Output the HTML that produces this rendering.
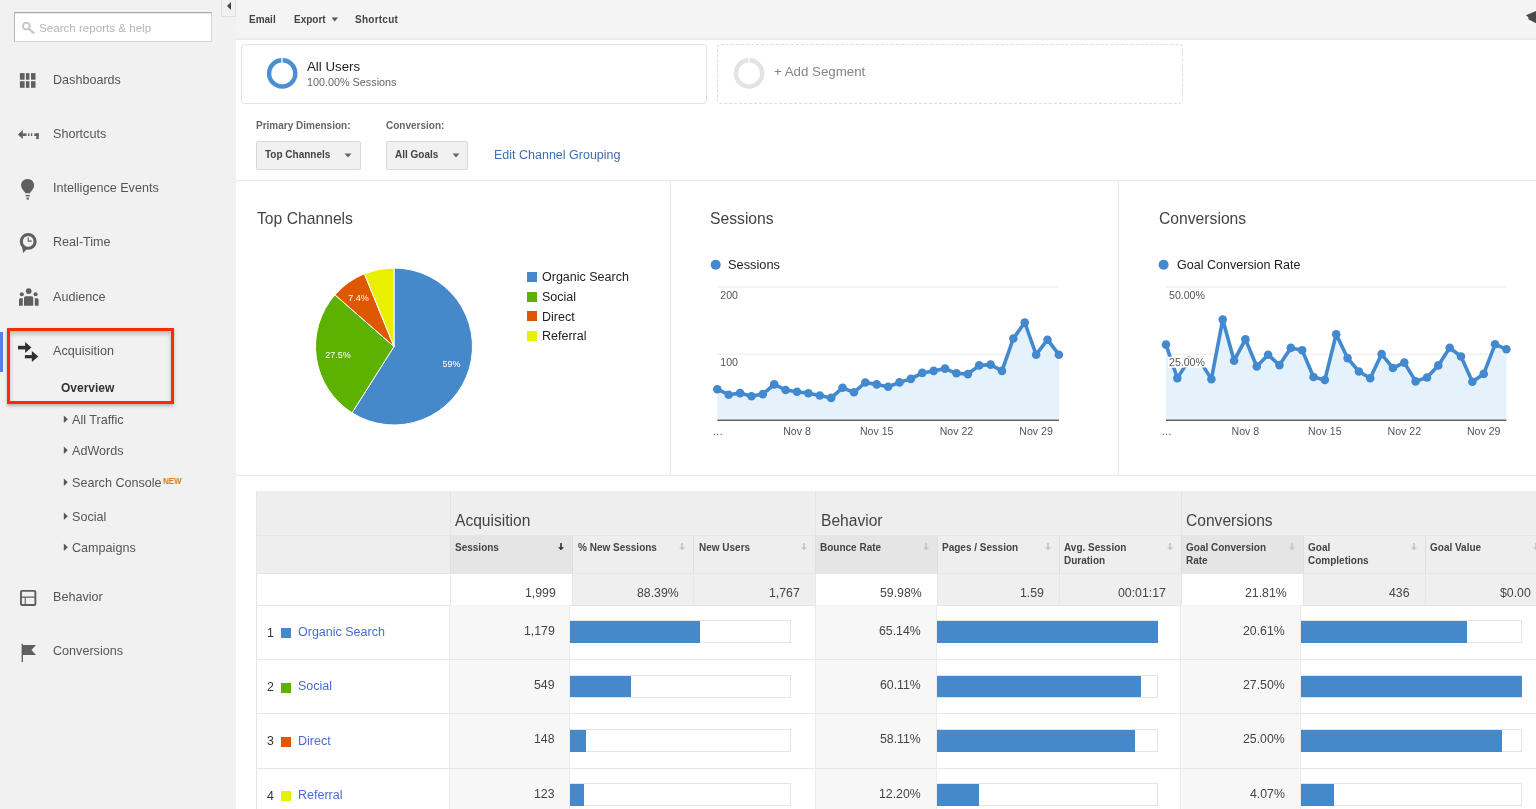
<!DOCTYPE html>
<html><head><meta charset="utf-8"><style>
html,body{margin:0;padding:0;width:1536px;height:809px;overflow:hidden;background:#fff;position:relative;font-family:"Liberation Sans", sans-serif}
.t{position:absolute;white-space:nowrap}
.t{will-change:transform}
</style></head><body>
<div style="position:absolute;left:0px;top:0px;width:236px;height:809px;background:#f1f1f1"></div><div style="position:absolute;left:14px;top:12px;width:198px;height:30px;background:#fff;border:1px solid #d6d6d6;border-top-color:#a8a8a8;border-left-color:#b8b8b8;box-shadow:inset 0 1px 1px rgba(0,0,0,.1);box-sizing:border-box"></div><svg style="position:absolute;left:16px;top:16px" width="24" height="24"><circle cx="10.3" cy="10.2" r="3.4" fill="none" stroke="#c8c8c8" stroke-width="2"/><path d="M13.4 13.3 L17.6 16.8" stroke="#c8c8c8" stroke-width="2.3" stroke-linecap="round"/></svg><div class="t" style="left:39px;top:22.18px;font-size:11.6px;line-height:11.6px;color:#b5b5b5;font-weight:400;">Search reports &amp; help</div><div style="position:absolute;left:221px;top:-1px;width:15px;height:18px;background:#f1f1f1;border:1px solid #ddd;box-sizing:border-box"></div><svg style="position:absolute;left:225px;top:1px" width="8" height="10"><path d="M6 1 L2 5 L6 9 Z" fill="#444"/></svg><div class="t" style="left:53px;top:73.53px;font-size:12.6px;line-height:12.6px;color:#555;font-weight:400;">Dashboards</div><div class="t" style="left:53px;top:127.63px;font-size:12.6px;line-height:12.6px;color:#555;font-weight:400;">Shortcuts</div><div class="t" style="left:53px;top:182.13px;font-size:12.6px;line-height:12.6px;color:#555;font-weight:400;">Intelligence Events</div><div class="t" style="left:53px;top:236.33px;font-size:12.6px;line-height:12.6px;color:#555;font-weight:400;">Real-Time</div><div class="t" style="left:53px;top:290.53px;font-size:12.6px;line-height:12.6px;color:#555;font-weight:400;">Audience</div><div class="t" style="left:53px;top:345.03px;font-size:12.6px;line-height:12.6px;color:#555;font-weight:400;">Acquisition</div><div class="t" style="left:53px;top:591.13px;font-size:12.6px;line-height:12.6px;color:#555;font-weight:400;">Behavior</div><div class="t" style="left:53px;top:645.33px;font-size:12.6px;line-height:12.6px;color:#555;font-weight:400;">Conversions</div><svg style="position:absolute;left:14px;top:66px" width="28" height="28" viewBox="0 0 28 28"><g fill="#5f5f5f"><rect x="5.9" y="7.1" width="4.7" height="6.6"/><rect x="11.9" y="7.1" width="3.5" height="6.6"/><rect x="17" y="7.1" width="4.5" height="6.6"/><rect x="5.9" y="15.2" width="4.7" height="6.6"/><rect x="11.9" y="15.2" width="3.5" height="6.6"/><rect x="17" y="15.2" width="4.5" height="6.6"/></g></svg><svg style="position:absolute;left:14px;top:124px" width="28" height="28" viewBox="0 0 28 28"><g fill="#5f5f5f"><path d="M3.9 10.6 L8.8 6.1 L8.8 15.1 Z"/><rect x="8.5" y="9.4" width="4" height="2.6"/><rect x="14" y="9.4" width="1.4" height="2.6"/><rect x="16.9" y="9.4" width="1.4" height="2.6"/><rect x="20.3" y="9.4" width="4.4" height="2.6"/><rect x="22.3" y="9.4" width="2.4" height="5.7"/></g></svg><svg style="position:absolute;left:14px;top:176px" width="28" height="28" viewBox="0 0 28 28"><g fill="#5f5f5f"><path d="M13.6 3.1 C9.9 3.1 7.1 5.9 7.1 9.3 C7.1 11.9 8.6 13.6 9.8 15 C10.6 15.9 11.2 16.6 11.2 17.3 L16.1 17.3 C16.1 16.6 16.7 15.9 17.5 15 C18.7 13.6 20.1 11.9 20.1 9.3 C20.1 5.9 17.3 3.1 13.6 3.1 Z"/><rect x="11.8" y="18.9" width="3.9" height="1.5"/><rect x="12.5" y="21.6" width="2.4" height="1.9"/></g></svg><svg style="position:absolute;left:14px;top:229px" width="28" height="28" viewBox="0 0 28 28"><circle cx="14.2" cy="12.4" r="6.9" fill="none" stroke="#5f5f5f" stroke-width="3.1"/><path d="M8 17.6 L9.2 23.9 L13.2 19.8 Z" fill="#5f5f5f"/><path d="M14.2 8.3 L14.2 12.1 L17.8 12.1" fill="none" stroke="#5f5f5f" stroke-width="1.1"/></svg><svg style="position:absolute;left:14px;top:283px" width="28" height="28" viewBox="0 0 28 28"><g fill="#5f5f5f"><circle cx="14.7" cy="8.05" r="2.9"/><circle cx="7.8" cy="11.2" r="2.05"/><circle cx="21.6" cy="11.2" r="2.05"/><path d="M10 22.8 L10 15 C10 14 10.8 13.3 11.8 13.3 L17.4 13.3 C18.4 13.3 19.2 14 19.2 15 L19.2 22.8 Z"/><path d="M5 22.8 L5 16.9 C5 15.9 5.8 15.2 6.8 15.2 L8.8 15.2 L8.8 22.8 Z"/><path d="M24.6 22.8 L24.6 16.9 C24.6 15.9 23.8 15.2 22.8 15.2 L20.8 15.2 L20.8 22.8 Z"/></g></svg><svg style="position:absolute;left:14px;top:338px" width="28" height="28" viewBox="0 0 28 28"><g fill="#2e2e2e"><rect x="4" y="7.8" width="7.6" height="3.6"/><path d="M11.1 4 L17.4 9.5 L11.1 14.9 Z"/><rect x="10.9" y="17.1" width="7.4" height="3.2"/><path d="M17.8 13 L24.3 18.5 L17.8 24 Z"/></g></svg><svg style="position:absolute;left:14px;top:584px" width="28" height="28" viewBox="0 0 28 28"><rect x="7" y="6.85" width="14.35" height="14.2" rx="1" fill="none" stroke="#5f5f5f" stroke-width="1.9"/><path d="M7 13.15 L21.3 13.15 M11.25 13.15 L11.25 21" stroke="#5f5f5f" stroke-width="1.1"/></svg><svg style="position:absolute;left:14px;top:640px" width="28" height="28" viewBox="0 0 28 28"><rect x="7.6" y="3.8" width="1.4" height="18.2" fill="#5f5f5f"/><path d="M8.3 5 L22 5 L17.5 10 L22 15 L8.3 15 Z" fill="#5f5f5f"/></svg><div style="position:absolute;left:0px;top:332px;width:3px;height:40px;background:#5a7bef"></div><div style="position:absolute;left:7px;top:328px;width:167px;height:76px;border:3px solid #fd2a06;box-sizing:border-box;box-shadow:0 2px 3px rgba(0,0,0,.25), inset 0 3px 4px rgba(0,0,0,.22)"></div><div class="t" style="left:61px;top:381.84px;font-size:12px;line-height:12px;color:#333;font-weight:700;">Overview</div><svg style="position:absolute;left:63.3px;top:414.8px" width="6" height="9"><path d="M0.8 0.5 L4.8 4.3 L0.8 8.1 Z" fill="#555"/></svg><div class="t" style="left:72px;top:413.53px;font-size:12.6px;line-height:12.6px;color:#555;font-weight:400;">All Traffic</div><svg style="position:absolute;left:63.3px;top:446.1px" width="6" height="9"><path d="M0.8 0.5 L4.8 4.3 L0.8 8.1 Z" fill="#555"/></svg><div class="t" style="left:72px;top:444.83px;font-size:12.6px;line-height:12.6px;color:#555;font-weight:400;">AdWords</div><svg style="position:absolute;left:63.3px;top:478.1px" width="6" height="9"><path d="M0.8 0.5 L4.8 4.3 L0.8 8.1 Z" fill="#555"/></svg><div class="t" style="left:72px;top:476.83px;font-size:12.6px;line-height:12.6px;color:#555;font-weight:400;">Search Console</div><svg style="position:absolute;left:63.3px;top:511.9px" width="6" height="9"><path d="M0.8 0.5 L4.8 4.3 L0.8 8.1 Z" fill="#555"/></svg><div class="t" style="left:72px;top:510.63px;font-size:12.6px;line-height:12.6px;color:#555;font-weight:400;">Social</div><svg style="position:absolute;left:63.3px;top:543.1px" width="6" height="9"><path d="M0.8 0.5 L4.8 4.3 L0.8 8.1 Z" fill="#555"/></svg><div class="t" style="left:72px;top:541.83px;font-size:12.6px;line-height:12.6px;color:#555;font-weight:400;">Campaigns</div><div class="t" style="left:163px;top:476.55px;font-size:8.8px;line-height:8.8px;color:#df7810;font-weight:700;transform:scaleX(0.9);transform-origin:0 0">NEW</div><div style="position:absolute;left:236px;top:0px;width:1300px;height:40px;background:#f4f4f4;border-bottom:2px solid #ebebeb;box-sizing:border-box"></div><div class="t" style="left:249px;top:14.53px;font-size:10px;line-height:10px;color:#444;font-weight:700;">Email</div><div class="t" style="left:294px;top:14.53px;font-size:10px;line-height:10px;color:#444;font-weight:700;">Export</div><svg style="position:absolute;left:331px;top:17px" width="8" height="5"><path d="M0.5 0.5 L7 0.5 L3.75 4.5 Z" fill="#555"/></svg><div class="t" style="left:355px;top:14.53px;font-size:10px;line-height:10px;color:#444;font-weight:700;letter-spacing:0.25px">Shortcut</div><svg style="position:absolute;left:1524px;top:10px" width="12" height="14"><path d="M1.9 5.3 L4.4 7.3 L4.4 9.3 L12 13.2 L12 0.9 Z" fill="#4a4a4a"/></svg><div style="position:absolute;left:241px;top:44px;width:466px;height:60px;border:1px solid #e2e2e2;border-radius:4px;box-sizing:border-box;background:#fff"></div><svg style="position:absolute;left:265px;top:56px" width="34" height="34" viewBox="0 0 34 34">
<circle cx="17.2" cy="17.4" r="13.1" fill="none" stroke="#4a8fd3" stroke-width="4.4"/>
<rect x="16.3" y="1" width="1.3" height="7" fill="#fff"/></svg><div class="t" style="left:307px;top:59.74px;font-size:13.3px;line-height:13.3px;color:#222;font-weight:400;">All Users</div><div class="t" style="left:307px;top:76.56px;font-size:10.8px;line-height:10.8px;color:#666;font-weight:400;">100.00% Sessions</div><div style="position:absolute;left:717px;top:44px;width:466px;height:60px;border:1px dashed #dddddd;border-radius:4px;box-sizing:border-box"></div><svg style="position:absolute;left:732px;top:56px" width="34" height="34" viewBox="0 0 34 34">
<circle cx="17" cy="17.4" r="13.1" fill="none" stroke="#e3e3e3" stroke-width="4.4"/>
<rect x="16.3" y="1" width="1.3" height="7" fill="#fff"/></svg><div class="t" style="left:774px;top:65.24px;font-size:13.3px;line-height:13.3px;color:#858585;font-weight:400;">+ Add Segment</div><div class="t" style="left:256px;top:121.33px;font-size:10px;line-height:10px;color:#666;font-weight:700;">Primary Dimension:</div><div class="t" style="left:386px;top:121.33px;font-size:10px;line-height:10px;color:#666;font-weight:700;">Conversion:</div><div style="position:absolute;left:256px;top:141px;width:105px;height:29px;background:#f1f1f1;border:1px solid #d9d9d9;border-radius:2px;box-sizing:border-box"></div><div class="t" style="left:265px;top:149.73px;font-size:10px;line-height:10px;color:#444;font-weight:700;">Top Channels</div><svg style="position:absolute;left:344px;top:153px" width="8" height="5"><path d="M0.5 0.5 L7.5 0.5 L4 4.5 Z" fill="#666"/></svg><div style="position:absolute;left:386px;top:141px;width:82px;height:29px;background:#f1f1f1;border:1px solid #d9d9d9;border-radius:2px;box-sizing:border-box"></div><div class="t" style="left:395px;top:149.73px;font-size:10px;line-height:10px;color:#444;font-weight:700;">All Goals</div><svg style="position:absolute;left:452px;top:153px" width="8" height="5"><path d="M0.5 0.5 L7.5 0.5 L4 4.5 Z" fill="#666"/></svg><div class="t" style="left:494px;top:148.92px;font-size:12.5px;line-height:12.5px;color:#3e6db4;font-weight:400;">Edit Channel Grouping</div><div style="position:absolute;left:236px;top:180px;width:1300px;height:1px;background:#e6e6e6"></div><div style="position:absolute;left:236px;top:475px;width:1300px;height:1px;background:#e6e6e6"></div><div style="position:absolute;left:670px;top:181px;width:1px;height:294px;background:#e9e9e9"></div><div style="position:absolute;left:1118px;top:181px;width:1px;height:294px;background:#e9e9e9"></div><div class="t" style="left:257px;top:211.21px;font-size:15.7px;line-height:15.7px;color:#444;font-weight:400;">Top Channels</div><div class="t" style="left:710px;top:211.21px;font-size:15.7px;line-height:15.7px;color:#444;font-weight:400;">Sessions</div><div class="t" style="left:1159px;top:211.21px;font-size:15.7px;line-height:15.7px;color:#444;font-weight:400;">Conversions</div><svg style="position:absolute;left:0;top:0" width="1536" height="809"><path d="M394 346.5 L394.00 268.00 A78.5 78.5 0 1 1 352.02 412.83 Z" fill="#4589cb" stroke="#fff" stroke-width="1" stroke-linejoin="round"/><path d="M394 346.5 L352.02 412.83 A78.5 78.5 0 0 1 334.93 294.80 Z" fill="#5db100" stroke="#fff" stroke-width="1" stroke-linejoin="round"/><path d="M394 346.5 L334.93 294.80 A78.5 78.5 0 0 1 364.40 273.79 Z" fill="#dd5800" stroke="#fff" stroke-width="1" stroke-linejoin="round"/><path d="M394 346.5 L364.40 273.79 A78.5 78.5 0 0 1 394.00 268.00 Z" fill="#e8f000" stroke="#fff" stroke-width="1" stroke-linejoin="round"/><text x="451.5" y="366.5" font-size="9" fill="#fff" text-anchor="middle" font-family='"Liberation Sans", sans-serif'>59%</text><text x="338" y="357.8" font-size="9" fill="#fff" text-anchor="middle" font-family='"Liberation Sans", sans-serif'>27.5%</text><text x="358.5" y="300.5" font-size="9" fill="#fff" text-anchor="middle" font-family='"Liberation Sans", sans-serif'>7.4%</text></svg><div style="position:absolute;left:527px;top:272px;width:10px;height:10px;background:#4589cb"></div><div class="t" style="left:542px;top:270.92px;font-size:12.5px;line-height:12.5px;color:#222;font-weight:400;">Organic Search</div><div style="position:absolute;left:527px;top:292px;width:10px;height:10px;background:#5db100"></div><div class="t" style="left:542px;top:290.72px;font-size:12.5px;line-height:12.5px;color:#222;font-weight:400;">Social</div><div style="position:absolute;left:527px;top:311px;width:10px;height:10px;background:#dd5800"></div><div class="t" style="left:542px;top:310.52px;font-size:12.5px;line-height:12.5px;color:#222;font-weight:400;">Direct</div><div style="position:absolute;left:527px;top:331px;width:10px;height:10px;background:#e8f000"></div><div class="t" style="left:542px;top:330.32px;font-size:12.5px;line-height:12.5px;color:#222;font-weight:400;">Referral</div><svg style="position:absolute;left:0;top:0" width="1536" height="809"><rect x="717.3" y="286.5" width="341.60000000000014" height="1" fill="#ececec"/><rect x="717.3" y="353.7" width="341.60000000000014" height="1" fill="#ececec"/><polygon points="717.3,420 717.30,389.20 728.69,394.70 740.07,393.10 751.46,396.30 762.85,394.10 774.23,384.40 785.62,390.00 797.01,391.70 808.39,393.30 819.78,395.50 831.17,397.90 842.55,387.80 853.94,392.30 865.33,382.50 876.71,384.40 888.10,386.80 899.49,382.40 910.87,378.90 922.26,372.90 933.65,370.90 945.03,368.60 956.42,373.30 967.81,374.10 979.19,365.40 990.58,364.60 1001.97,370.90 1013.35,338.50 1024.74,322.50 1036.13,354.70 1047.51,339.70 1058.90,354.70 1058.9,420" fill="#e6f2fb"/><polyline points="717.30,389.20 728.69,394.70 740.07,393.10 751.46,396.30 762.85,394.10 774.23,384.40 785.62,390.00 797.01,391.70 808.39,393.30 819.78,395.50 831.17,397.90 842.55,387.80 853.94,392.30 865.33,382.50 876.71,384.40 888.10,386.80 899.49,382.40 910.87,378.90 922.26,372.90 933.65,370.90 945.03,368.60 956.42,373.30 967.81,374.10 979.19,365.40 990.58,364.60 1001.97,370.90 1013.35,338.50 1024.74,322.50 1036.13,354.70 1047.51,339.70 1058.90,354.70" fill="none" stroke="#4389d0" stroke-width="3.6" stroke-linejoin="round"/><circle cx="717.30" cy="389.20" r="4.3" fill="#4389d0"/><circle cx="728.69" cy="394.70" r="4.3" fill="#4389d0"/><circle cx="740.07" cy="393.10" r="4.3" fill="#4389d0"/><circle cx="751.46" cy="396.30" r="4.3" fill="#4389d0"/><circle cx="762.85" cy="394.10" r="4.3" fill="#4389d0"/><circle cx="774.23" cy="384.40" r="4.3" fill="#4389d0"/><circle cx="785.62" cy="390.00" r="4.3" fill="#4389d0"/><circle cx="797.01" cy="391.70" r="4.3" fill="#4389d0"/><circle cx="808.39" cy="393.30" r="4.3" fill="#4389d0"/><circle cx="819.78" cy="395.50" r="4.3" fill="#4389d0"/><circle cx="831.17" cy="397.90" r="4.3" fill="#4389d0"/><circle cx="842.55" cy="387.80" r="4.3" fill="#4389d0"/><circle cx="853.94" cy="392.30" r="4.3" fill="#4389d0"/><circle cx="865.33" cy="382.50" r="4.3" fill="#4389d0"/><circle cx="876.71" cy="384.40" r="4.3" fill="#4389d0"/><circle cx="888.10" cy="386.80" r="4.3" fill="#4389d0"/><circle cx="899.49" cy="382.40" r="4.3" fill="#4389d0"/><circle cx="910.87" cy="378.90" r="4.3" fill="#4389d0"/><circle cx="922.26" cy="372.90" r="4.3" fill="#4389d0"/><circle cx="933.65" cy="370.90" r="4.3" fill="#4389d0"/><circle cx="945.03" cy="368.60" r="4.3" fill="#4389d0"/><circle cx="956.42" cy="373.30" r="4.3" fill="#4389d0"/><circle cx="967.81" cy="374.10" r="4.3" fill="#4389d0"/><circle cx="979.19" cy="365.40" r="4.3" fill="#4389d0"/><circle cx="990.58" cy="364.60" r="4.3" fill="#4389d0"/><circle cx="1001.97" cy="370.90" r="4.3" fill="#4389d0"/><circle cx="1013.35" cy="338.50" r="4.3" fill="#4389d0"/><circle cx="1024.74" cy="322.50" r="4.3" fill="#4389d0"/><circle cx="1036.13" cy="354.70" r="4.3" fill="#4389d0"/><circle cx="1047.51" cy="339.70" r="4.3" fill="#4389d0"/><circle cx="1058.90" cy="354.70" r="4.3" fill="#4389d0"/><rect x="717.3" y="419.6" width="341.60000000000014" height="1.3" fill="#4d4d4d"/><text x="720.3" y="299" font-size="10.6" fill="#555" font-family='"Liberation Sans", sans-serif' stroke="#fff" stroke-width="3" paint-order="stroke">200</text><text x="720.3" y="365.6" font-size="10.6" fill="#555" font-family='"Liberation Sans", sans-serif' stroke="#fff" stroke-width="3" paint-order="stroke">100</text><text x="797.01" y="435" font-size="10.6" fill="#555" text-anchor="middle" font-family='"Liberation Sans", sans-serif'>Nov 8</text><text x="876.71" y="435" font-size="10.6" fill="#555" text-anchor="middle" font-family='"Liberation Sans", sans-serif'>Nov 15</text><text x="956.42" y="435" font-size="10.6" fill="#555" text-anchor="middle" font-family='"Liberation Sans", sans-serif'>Nov 22</text><text x="1036.13" y="435" font-size="10.6" fill="#555" text-anchor="middle" font-family='"Liberation Sans", sans-serif'>Nov 29</text><text x="712.5" y="435" font-size="10.6" fill="#555" font-family='"Liberation Sans", sans-serif'>…</text></svg><svg style="position:absolute;left:0;top:0" width="1536" height="809"><rect x="1166" y="286.5" width="340.4000000000001" height="1" fill="#ececec"/><rect x="1166" y="353.7" width="340.4000000000001" height="1" fill="#ececec"/><polygon points="1166,420 1166.00,344.60 1177.35,378.10 1188.69,360.50 1200.04,361.00 1211.39,379.10 1222.73,319.60 1234.08,360.70 1245.43,339.40 1256.77,366.50 1268.12,354.80 1279.47,365.10 1290.81,347.90 1302.16,350.20 1313.51,377.00 1324.85,379.90 1336.20,334.30 1347.55,358.10 1358.89,371.50 1370.24,378.30 1381.59,354.10 1392.93,368.00 1404.28,362.60 1415.63,381.40 1426.97,377.50 1438.32,365.40 1449.67,347.80 1461.01,356.50 1472.36,381.80 1483.71,373.90 1495.05,344.30 1506.40,349.20 1506.4,420" fill="#e6f2fb"/><polyline points="1166.00,344.60 1177.35,378.10 1188.69,360.50 1200.04,361.00 1211.39,379.10 1222.73,319.60 1234.08,360.70 1245.43,339.40 1256.77,366.50 1268.12,354.80 1279.47,365.10 1290.81,347.90 1302.16,350.20 1313.51,377.00 1324.85,379.90 1336.20,334.30 1347.55,358.10 1358.89,371.50 1370.24,378.30 1381.59,354.10 1392.93,368.00 1404.28,362.60 1415.63,381.40 1426.97,377.50 1438.32,365.40 1449.67,347.80 1461.01,356.50 1472.36,381.80 1483.71,373.90 1495.05,344.30 1506.40,349.20" fill="none" stroke="#4389d0" stroke-width="3.6" stroke-linejoin="round"/><circle cx="1166.00" cy="344.60" r="4.3" fill="#4389d0"/><circle cx="1177.35" cy="378.10" r="4.3" fill="#4389d0"/><circle cx="1188.69" cy="360.50" r="4.3" fill="#4389d0"/><circle cx="1200.04" cy="361.00" r="4.3" fill="#4389d0"/><circle cx="1211.39" cy="379.10" r="4.3" fill="#4389d0"/><circle cx="1222.73" cy="319.60" r="4.3" fill="#4389d0"/><circle cx="1234.08" cy="360.70" r="4.3" fill="#4389d0"/><circle cx="1245.43" cy="339.40" r="4.3" fill="#4389d0"/><circle cx="1256.77" cy="366.50" r="4.3" fill="#4389d0"/><circle cx="1268.12" cy="354.80" r="4.3" fill="#4389d0"/><circle cx="1279.47" cy="365.10" r="4.3" fill="#4389d0"/><circle cx="1290.81" cy="347.90" r="4.3" fill="#4389d0"/><circle cx="1302.16" cy="350.20" r="4.3" fill="#4389d0"/><circle cx="1313.51" cy="377.00" r="4.3" fill="#4389d0"/><circle cx="1324.85" cy="379.90" r="4.3" fill="#4389d0"/><circle cx="1336.20" cy="334.30" r="4.3" fill="#4389d0"/><circle cx="1347.55" cy="358.10" r="4.3" fill="#4389d0"/><circle cx="1358.89" cy="371.50" r="4.3" fill="#4389d0"/><circle cx="1370.24" cy="378.30" r="4.3" fill="#4389d0"/><circle cx="1381.59" cy="354.10" r="4.3" fill="#4389d0"/><circle cx="1392.93" cy="368.00" r="4.3" fill="#4389d0"/><circle cx="1404.28" cy="362.60" r="4.3" fill="#4389d0"/><circle cx="1415.63" cy="381.40" r="4.3" fill="#4389d0"/><circle cx="1426.97" cy="377.50" r="4.3" fill="#4389d0"/><circle cx="1438.32" cy="365.40" r="4.3" fill="#4389d0"/><circle cx="1449.67" cy="347.80" r="4.3" fill="#4389d0"/><circle cx="1461.01" cy="356.50" r="4.3" fill="#4389d0"/><circle cx="1472.36" cy="381.80" r="4.3" fill="#4389d0"/><circle cx="1483.71" cy="373.90" r="4.3" fill="#4389d0"/><circle cx="1495.05" cy="344.30" r="4.3" fill="#4389d0"/><circle cx="1506.40" cy="349.20" r="4.3" fill="#4389d0"/><rect x="1166" y="419.6" width="340.4000000000001" height="1.3" fill="#4d4d4d"/><text x="1169" y="299" font-size="10.6" fill="#555" font-family='"Liberation Sans", sans-serif' stroke="#fff" stroke-width="3" paint-order="stroke">50.00%</text><rect x="1168" y="356.8" width="38.5" height="10.5" fill="#fff" fill-opacity="0.92"/><text x="1169" y="365.6" font-size="10.6" fill="#555" font-family='"Liberation Sans", sans-serif' stroke="#fff" stroke-width="3" paint-order="stroke">25.00%</text><text x="1245.43" y="435" font-size="10.6" fill="#555" text-anchor="middle" font-family='"Liberation Sans", sans-serif'>Nov 8</text><text x="1324.85" y="435" font-size="10.6" fill="#555" text-anchor="middle" font-family='"Liberation Sans", sans-serif'>Nov 15</text><text x="1404.28" y="435" font-size="10.6" fill="#555" text-anchor="middle" font-family='"Liberation Sans", sans-serif'>Nov 22</text><text x="1483.71" y="435" font-size="10.6" fill="#555" text-anchor="middle" font-family='"Liberation Sans", sans-serif'>Nov 29</text><text x="1161.2" y="435" font-size="10.6" fill="#555" font-family='"Liberation Sans", sans-serif'>…</text></svg><svg style="position:absolute;left:0;top:0" width="1536" height="809"><circle cx="715.7" cy="264.8" r="5" fill="#4389d0"/><circle cx="1163.6" cy="264.7" r="5" fill="#4389d0"/></svg><div class="t" style="left:728px;top:259.16px;font-size:12.8px;line-height:12.8px;color:#222;font-weight:400;">Sessions</div><div class="t" style="left:1177px;top:259.37px;font-size:12.55px;line-height:12.55px;color:#222;font-weight:400;">Goal Conversion Rate</div><div style="position:absolute;left:256px;top:491px;width:1280px;height:82.5px;background:#eeeeee"></div><div style="position:absolute;left:450px;top:535.5px;width:122.5px;height:38px;background:#e5e5e5"></div><div style="position:absolute;left:815px;top:535.5px;width:122px;height:38px;background:#e5e5e5"></div><div style="position:absolute;left:1181px;top:535.5px;width:122px;height:38px;background:#e5e5e5"></div><div style="position:absolute;left:256px;top:535px;width:1280px;height:1px;background:#e6e6e6"></div><div style="position:absolute;left:256px;top:573px;width:1280px;height:1px;background:#e6e6e6"></div><div style="position:absolute;left:256px;top:491px;width:1px;height:318px;background:#e6e6e6"></div><div style="position:absolute;left:450px;top:491px;width:1px;height:45px;background:#e4e4e4"></div><div style="position:absolute;left:815px;top:491px;width:1px;height:45px;background:#e4e4e4"></div><div style="position:absolute;left:1181px;top:491px;width:1px;height:45px;background:#e4e4e4"></div><div style="position:absolute;left:450px;top:536px;width:1px;height:37px;background:#dedede"></div><div style="position:absolute;left:572px;top:536px;width:1px;height:37px;background:#dedede"></div><div style="position:absolute;left:693px;top:536px;width:1px;height:37px;background:#dedede"></div><div style="position:absolute;left:815px;top:536px;width:1px;height:37px;background:#dedede"></div><div style="position:absolute;left:937px;top:536px;width:1px;height:37px;background:#dedede"></div><div style="position:absolute;left:1059px;top:536px;width:1px;height:37px;background:#dedede"></div><div style="position:absolute;left:1181px;top:536px;width:1px;height:37px;background:#dedede"></div><div style="position:absolute;left:1303px;top:536px;width:1px;height:37px;background:#dedede"></div><div style="position:absolute;left:1425px;top:536px;width:1px;height:37px;background:#dedede"></div><div style="position:absolute;left:1547px;top:536px;width:1px;height:37px;background:#dedede"></div><div class="t" style="left:455px;top:512.69px;font-size:15.6px;line-height:15.6px;color:#444;font-weight:400;">Acquisition</div><div class="t" style="left:821px;top:512.69px;font-size:15.6px;line-height:15.6px;color:#444;font-weight:400;">Behavior</div><div class="t" style="left:1186px;top:512.69px;font-size:15.6px;line-height:15.6px;color:#444;font-weight:400;">Conversions</div><div class="t" style="left:455px;top:543.03px;font-size:10px;line-height:10px;color:#444;font-weight:700;">Sessions</div><svg style="position:absolute;left:558.0px;top:543px" width="7" height="8"><path d="M2.2 0 L3.8 0 L3.8 4.2 L6.1 4.2 L3 7.3 L-0.1 4.2 L2.2 4.2 Z" fill="#333"/></svg><div class="t" style="left:578px;top:543.03px;font-size:10px;line-height:10px;color:#444;font-weight:700;">% New Sessions</div><svg style="position:absolute;left:679.0px;top:543px" width="7" height="8"><path d="M2.2 0 L3.8 0 L3.8 4.2 L6.1 4.2 L3 7.3 L-0.1 4.2 L2.2 4.2 Z" fill="#c4c4c4"/></svg><div class="t" style="left:699px;top:543.03px;font-size:10px;line-height:10px;color:#444;font-weight:700;">New Users</div><svg style="position:absolute;left:800.5px;top:543px" width="7" height="8"><path d="M2.2 0 L3.8 0 L3.8 4.2 L6.1 4.2 L3 7.3 L-0.1 4.2 L2.2 4.2 Z" fill="#c4c4c4"/></svg><div class="t" style="left:820px;top:543.03px;font-size:10px;line-height:10px;color:#444;font-weight:700;">Bounce Rate</div><svg style="position:absolute;left:922.5px;top:543px" width="7" height="8"><path d="M2.2 0 L3.8 0 L3.8 4.2 L6.1 4.2 L3 7.3 L-0.1 4.2 L2.2 4.2 Z" fill="#c4c4c4"/></svg><div class="t" style="left:942px;top:543.03px;font-size:10px;line-height:10px;color:#444;font-weight:700;">Pages / Session</div><svg style="position:absolute;left:1044.5px;top:543px" width="7" height="8"><path d="M2.2 0 L3.8 0 L3.8 4.2 L6.1 4.2 L3 7.3 L-0.1 4.2 L2.2 4.2 Z" fill="#c4c4c4"/></svg><div class="t" style="left:1064px;top:543.03px;font-size:10px;line-height:10px;color:#444;font-weight:700;">Avg. Session</div><div class="t" style="left:1064px;top:555.63px;font-size:10px;line-height:10px;color:#444;font-weight:700;">Duration</div><svg style="position:absolute;left:1166.5px;top:543px" width="7" height="8"><path d="M2.2 0 L3.8 0 L3.8 4.2 L6.1 4.2 L3 7.3 L-0.1 4.2 L2.2 4.2 Z" fill="#c4c4c4"/></svg><div class="t" style="left:1186px;top:543.03px;font-size:10px;line-height:10px;color:#444;font-weight:700;">Goal Conversion</div><div class="t" style="left:1186px;top:555.63px;font-size:10px;line-height:10px;color:#444;font-weight:700;">Rate</div><svg style="position:absolute;left:1288.5px;top:543px" width="7" height="8"><path d="M2.2 0 L3.8 0 L3.8 4.2 L6.1 4.2 L3 7.3 L-0.1 4.2 L2.2 4.2 Z" fill="#c4c4c4"/></svg><div class="t" style="left:1308px;top:543.03px;font-size:10px;line-height:10px;color:#444;font-weight:700;">Goal</div><div class="t" style="left:1308px;top:555.63px;font-size:10px;line-height:10px;color:#444;font-weight:700;">Completions</div><svg style="position:absolute;left:1410.5px;top:543px" width="7" height="8"><path d="M2.2 0 L3.8 0 L3.8 4.2 L6.1 4.2 L3 7.3 L-0.1 4.2 L2.2 4.2 Z" fill="#c4c4c4"/></svg><div class="t" style="left:1430px;top:543.03px;font-size:10px;line-height:10px;color:#444;font-weight:700;">Goal Value</div><svg style="position:absolute;left:1532.5px;top:543px" width="7" height="8"><path d="M2.2 0 L3.8 0 L3.8 4.2 L6.1 4.2 L3 7.3 L-0.1 4.2 L2.2 4.2 Z" fill="#c4c4c4"/></svg><div style="position:absolute;left:256.5px;top:573.5px;width:1280px;height:31.5px;background:#fff"></div><div style="position:absolute;left:572.5px;top:573.5px;width:121.0px;height:31.5px;background:#efefef"></div><div style="position:absolute;left:693.5px;top:573.5px;width:121.5px;height:31.5px;background:#efefef"></div><div style="position:absolute;left:937px;top:573.5px;width:122px;height:31.5px;background:#efefef"></div><div style="position:absolute;left:1059px;top:573.5px;width:122px;height:31.5px;background:#efefef"></div><div style="position:absolute;left:1303px;top:573.5px;width:122px;height:31.5px;background:#efefef"></div><div style="position:absolute;left:1425px;top:573.5px;width:122px;height:31.5px;background:#efefef"></div><div style="position:absolute;left:450px;top:574px;width:1px;height:31px;background:#e6e6e6"></div><div style="position:absolute;left:572px;top:574px;width:1px;height:31px;background:#e6e6e6"></div><div style="position:absolute;left:693px;top:574px;width:1px;height:31px;background:#e6e6e6"></div><div style="position:absolute;left:815px;top:574px;width:1px;height:31px;background:#e6e6e6"></div><div style="position:absolute;left:937px;top:574px;width:1px;height:31px;background:#e6e6e6"></div><div style="position:absolute;left:1059px;top:574px;width:1px;height:31px;background:#e6e6e6"></div><div style="position:absolute;left:1181px;top:574px;width:1px;height:31px;background:#e6e6e6"></div><div style="position:absolute;left:1303px;top:574px;width:1px;height:31px;background:#e6e6e6"></div><div style="position:absolute;left:1425px;top:574px;width:1px;height:31px;background:#e6e6e6"></div><div style="position:absolute;left:1547px;top:574px;width:1px;height:31px;background:#e6e6e6"></div><div class="t" style="right:979.9px;top:587.09px;font-size:12.3px;line-height:12.3px;color:#444;font-weight:400;">1,999</div><div class="t" style="right:857.2px;top:587.09px;font-size:12.3px;line-height:12.3px;color:#444;font-weight:400;">88.39%</div><div class="t" style="right:736px;top:587.09px;font-size:12.3px;line-height:12.3px;color:#444;font-weight:400;">1,767</div><div class="t" style="right:614.2px;top:587.09px;font-size:12.3px;line-height:12.3px;color:#444;font-weight:400;">59.98%</div><div class="t" style="right:492px;top:587.09px;font-size:12.3px;line-height:12.3px;color:#444;font-weight:400;">1.59</div><div class="t" style="right:370.0999999999999px;top:587.09px;font-size:12.3px;line-height:12.3px;color:#444;font-weight:400;">00:01:17</div><div class="t" style="right:248.79999999999995px;top:587.09px;font-size:12.3px;line-height:12.3px;color:#444;font-weight:400;">21.81%</div><div class="t" style="right:126.5px;top:587.09px;font-size:12.3px;line-height:12.3px;color:#444;font-weight:400;">436</div><div class="t" style="right:5px;top:587.09px;font-size:12.3px;line-height:12.3px;color:#444;font-weight:400;">$0.00</div><div style="position:absolute;left:256px;top:604.5px;width:1280px;height:1px;background:#e6e6e6"></div><div style="position:absolute;left:450px;top:605.0px;width:120px;height:54.3px;background:#f7f7f7"></div><div style="position:absolute;left:815px;top:605.0px;width:122px;height:54.3px;background:#f7f7f7"></div><div style="position:absolute;left:1181px;top:605.0px;width:120px;height:54.3px;background:#f7f7f7"></div><div class="t" style="left:267px;top:626.79px;font-size:12.3px;line-height:12.3px;color:#333;font-weight:400;">1</div><div style="position:absolute;left:281.4px;top:628.3px;width:10px;height:10px;background:#4589cb"></div><div class="t" style="left:298px;top:626.02px;font-size:12.5px;line-height:12.5px;color:#4a6bd3;font-weight:400;">Organic Search</div><div class="t" style="right:981.6px;top:624.89px;font-size:12.3px;line-height:12.3px;color:#444;font-weight:400;">1,179</div><div class="t" style="right:614.9px;top:624.89px;font-size:12.3px;line-height:12.3px;color:#444;font-weight:400;">65.14%</div><div class="t" style="right:251px;top:624.89px;font-size:12.3px;line-height:12.3px;color:#444;font-weight:400;">20.61%</div><div style="position:absolute;left:570px;top:620.4px;width:220.7px;height:23px;border:1px solid #e4e4e4;box-sizing:border-box;background:#fff"></div><div style="position:absolute;left:570px;top:621.4px;width:130.2px;height:21.5px;background:#4589cb"></div><div style="position:absolute;left:937px;top:620.4px;width:221.4px;height:23px;border:1px solid #e4e4e4;box-sizing:border-box;background:#fff"></div><div style="position:absolute;left:937px;top:621.4px;width:221.4px;height:21.5px;background:#4589cb"></div><div style="position:absolute;left:1301px;top:620.4px;width:221px;height:23px;border:1px solid #e4e4e4;box-sizing:border-box;background:#fff"></div><div style="position:absolute;left:1301px;top:621.4px;width:165.6px;height:21.5px;background:#4589cb"></div><div style="position:absolute;left:450px;top:659.3px;width:120px;height:54.3px;background:#f7f7f7"></div><div style="position:absolute;left:815px;top:659.3px;width:122px;height:54.3px;background:#f7f7f7"></div><div style="position:absolute;left:1181px;top:659.3px;width:120px;height:54.3px;background:#f7f7f7"></div><div class="t" style="left:267px;top:681.09px;font-size:12.3px;line-height:12.3px;color:#333;font-weight:400;">2</div><div style="position:absolute;left:281.4px;top:682.5999999999999px;width:10px;height:10px;background:#5db100"></div><div class="t" style="left:298px;top:680.32px;font-size:12.5px;line-height:12.5px;color:#4a6bd3;font-weight:400;">Social</div><div class="t" style="right:981.6px;top:679.19px;font-size:12.3px;line-height:12.3px;color:#444;font-weight:400;">549</div><div class="t" style="right:614.9px;top:679.19px;font-size:12.3px;line-height:12.3px;color:#444;font-weight:400;">60.11%</div><div class="t" style="right:251px;top:679.19px;font-size:12.3px;line-height:12.3px;color:#444;font-weight:400;">27.50%</div><div style="position:absolute;left:570px;top:674.6999999999999px;width:220.7px;height:23px;border:1px solid #e4e4e4;box-sizing:border-box;background:#fff"></div><div style="position:absolute;left:570px;top:675.6999999999999px;width:60.6px;height:21.5px;background:#4589cb"></div><div style="position:absolute;left:937px;top:674.6999999999999px;width:221.4px;height:23px;border:1px solid #e4e4e4;box-sizing:border-box;background:#fff"></div><div style="position:absolute;left:937px;top:675.6999999999999px;width:204.3px;height:21.5px;background:#4589cb"></div><div style="position:absolute;left:1301px;top:674.6999999999999px;width:221px;height:23px;border:1px solid #e4e4e4;box-sizing:border-box;background:#fff"></div><div style="position:absolute;left:1301px;top:675.6999999999999px;width:221.0px;height:21.5px;background:#4589cb"></div><div style="position:absolute;left:450px;top:713.6px;width:120px;height:54.3px;background:#f7f7f7"></div><div style="position:absolute;left:815px;top:713.6px;width:122px;height:54.3px;background:#f7f7f7"></div><div style="position:absolute;left:1181px;top:713.6px;width:120px;height:54.3px;background:#f7f7f7"></div><div class="t" style="left:267px;top:735.39px;font-size:12.3px;line-height:12.3px;color:#333;font-weight:400;">3</div><div style="position:absolute;left:281.4px;top:736.9px;width:10px;height:10px;background:#dd5800"></div><div class="t" style="left:298px;top:734.62px;font-size:12.5px;line-height:12.5px;color:#4a6bd3;font-weight:400;">Direct</div><div class="t" style="right:981.6px;top:733.49px;font-size:12.3px;line-height:12.3px;color:#444;font-weight:400;">148</div><div class="t" style="right:614.9px;top:733.49px;font-size:12.3px;line-height:12.3px;color:#444;font-weight:400;">58.11%</div><div class="t" style="right:251px;top:733.49px;font-size:12.3px;line-height:12.3px;color:#444;font-weight:400;">25.00%</div><div style="position:absolute;left:570px;top:729.0px;width:220.7px;height:23px;border:1px solid #e4e4e4;box-sizing:border-box;background:#fff"></div><div style="position:absolute;left:570px;top:730.0px;width:16.3px;height:21.5px;background:#4589cb"></div><div style="position:absolute;left:937px;top:729.0px;width:221.4px;height:23px;border:1px solid #e4e4e4;box-sizing:border-box;background:#fff"></div><div style="position:absolute;left:937px;top:730.0px;width:197.5px;height:21.5px;background:#4589cb"></div><div style="position:absolute;left:1301px;top:729.0px;width:221px;height:23px;border:1px solid #e4e4e4;box-sizing:border-box;background:#fff"></div><div style="position:absolute;left:1301px;top:730.0px;width:200.9px;height:21.5px;background:#4589cb"></div><div style="position:absolute;left:450px;top:767.9px;width:120px;height:54.3px;background:#f7f7f7"></div><div style="position:absolute;left:815px;top:767.9px;width:122px;height:54.3px;background:#f7f7f7"></div><div style="position:absolute;left:1181px;top:767.9px;width:120px;height:54.3px;background:#f7f7f7"></div><div class="t" style="left:267px;top:789.69px;font-size:12.3px;line-height:12.3px;color:#333;font-weight:400;">4</div><div style="position:absolute;left:281.4px;top:791.1999999999999px;width:10px;height:10px;background:#e8f000"></div><div class="t" style="left:298px;top:788.92px;font-size:12.5px;line-height:12.5px;color:#4a6bd3;font-weight:400;">Referral</div><div class="t" style="right:981.6px;top:787.79px;font-size:12.3px;line-height:12.3px;color:#444;font-weight:400;">123</div><div class="t" style="right:614.9px;top:787.79px;font-size:12.3px;line-height:12.3px;color:#444;font-weight:400;">12.20%</div><div class="t" style="right:251px;top:787.79px;font-size:12.3px;line-height:12.3px;color:#444;font-weight:400;">4.07%</div><div style="position:absolute;left:570px;top:783.3px;width:220.7px;height:23px;border:1px solid #e4e4e4;box-sizing:border-box;background:#fff"></div><div style="position:absolute;left:570px;top:784.3px;width:13.6px;height:21.5px;background:#4589cb"></div><div style="position:absolute;left:937px;top:783.3px;width:221.4px;height:23px;border:1px solid #e4e4e4;box-sizing:border-box;background:#fff"></div><div style="position:absolute;left:937px;top:784.3px;width:41.5px;height:21.5px;background:#4589cb"></div><div style="position:absolute;left:1301px;top:783.3px;width:221px;height:23px;border:1px solid #e4e4e4;box-sizing:border-box;background:#fff"></div><div style="position:absolute;left:1301px;top:784.3px;width:32.7px;height:21.5px;background:#4589cb"></div><div style="position:absolute;left:256px;top:659.0px;width:1280px;height:1px;background:#e6e6e6"></div><div style="position:absolute;left:256px;top:713.3px;width:1280px;height:1px;background:#e6e6e6"></div><div style="position:absolute;left:256px;top:767.6px;width:1280px;height:1px;background:#e6e6e6"></div><div style="position:absolute;left:256px;top:821.9px;width:1280px;height:1px;background:#e6e6e6"></div><div style="position:absolute;left:449px;top:605px;width:1px;height:204px;background:#ebebeb"></div><div style="position:absolute;left:569px;top:605px;width:1px;height:204px;background:#ebebeb"></div><div style="position:absolute;left:815px;top:605px;width:1px;height:204px;background:#ebebeb"></div><div style="position:absolute;left:936px;top:605px;width:1px;height:204px;background:#ebebeb"></div><div style="position:absolute;left:1180px;top:605px;width:1px;height:204px;background:#ebebeb"></div><div style="position:absolute;left:1300px;top:605px;width:1px;height:204px;background:#ebebeb"></div>
</body></html>
